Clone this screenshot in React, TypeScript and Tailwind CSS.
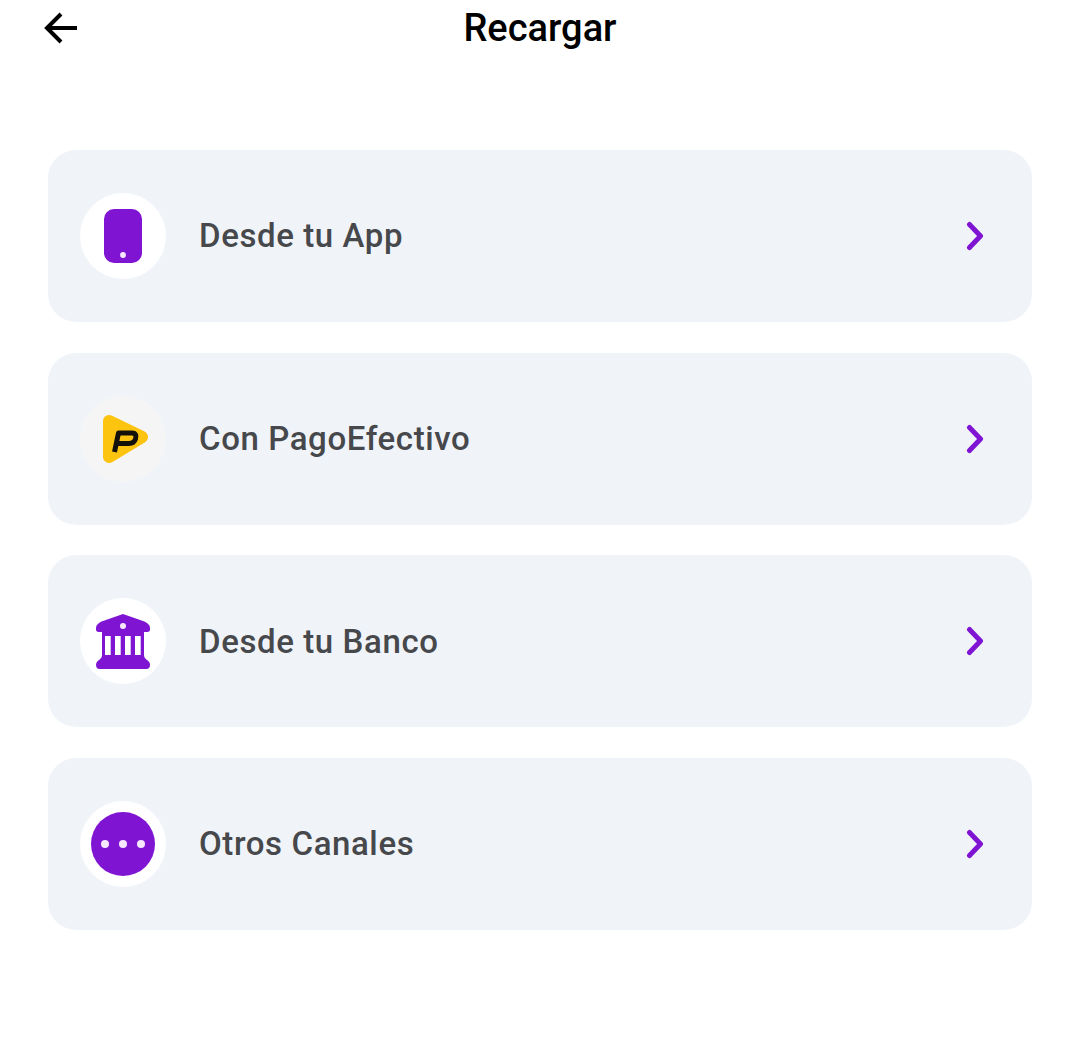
import React from 'react';

function PhoneIcon() {
  return (
    <svg width="38" height="54" viewBox="0 0 38 54">
      <rect x="0" y="0" width="38" height="54" rx="10" fill="#7f14d3" />
      <circle cx="19" cy="46" r="2.9" fill="#f6e9ff" />
    </svg>
  );
}

function PagoIcon() {
  return (
    <svg width="48" height="48" viewBox="0 0 48 48" className="ml-[8px]">
      <path d="M6 6 L39 22 L6 42 Z" fill="#fcc30f" stroke="#fcc30f" strokeWidth="12" strokeLinejoin="round" />
      <path d="M11.5 37 L15.5 18 L29 18 C33 18 33.5 21 32.5 24 C31.5 27 29 28.5 26 28.5 L14 28.5" fill="none" stroke="#14110a" strokeWidth="5" strokeLinejoin="round" />
    </svg>
  );
}

function BankIcon() {
  return (
    <svg width="54" height="55" viewBox="0 0 54 55">
      <path d="M27 0 L47 7 C51 8.5 54 11 54 14 L54 15.5 C54 17 53 18 51.5 18 L2.5 18 C1 18 0 17 0 15.5 L0 14 C0 11 3 8.5 7 7 Z" fill="#7f14d3" />
      <circle cx="27" cy="12" r="3" fill="#f6e9ff" />
      <path d="M6 18 L48 18 L48 41 C48 44 50 45 51 46 C53 47 54 49 54 51 C54 53.5 52.5 55 50.5 55 L3.5 55 C1.5 55 0 53.5 0 51 C0 49 1 47 3 46 C4 45 6 44 6 41 Z" fill="#7f14d3" />
      <rect x="9" y="22" width="5.7" height="19" fill="#ffffff" />
      <rect x="19" y="22" width="5.7" height="19" fill="#ffffff" />
      <rect x="29" y="22" width="5.7" height="19" fill="#ffffff" />
      <rect x="39" y="22" width="5.7" height="19" fill="#ffffff" />
    </svg>
  );
}

function DotsIcon() {
  return (
    <svg width="64" height="64" viewBox="0 0 64 64">
      <circle cx="32" cy="32" r="32" fill="#7f14d3" />
      <circle cx="14" cy="32" r="4" fill="#f6e9ff" />
      <circle cx="32" cy="32" r="4" fill="#f6e9ff" />
      <circle cx="50" cy="32" r="4" fill="#f6e9ff" />
    </svg>
  );
}

function Chevron() {
  return (
    <svg width="18" height="30" viewBox="0 0 18 30" fill="none">
      <path d="M3.5 3.5 L14.5 15 L3.5 26.5" stroke="#7f14d3" strokeWidth="5" strokeLinecap="round" strokeLinejoin="round" />
    </svg>
  );
}

const rows = [
  { label: 'Desde tu App', icon: <PhoneIcon />, circle: 'bg-white' },
  { label: 'Con PagoEfectivo', icon: <PagoIcon />, circle: 'bg-[#f5f5f6]' },
  { label: 'Desde tu Banco', icon: <BankIcon />, circle: 'bg-white' },
  { label: 'Otros Canales', icon: <DotsIcon />, circle: 'bg-white' },
];

export default function App() {
  return (
    <div className="w-[1080px] h-[1042px] bg-white font-['Roboto',sans-serif] overflow-hidden">
      <header className="flex items-center h-[56px] pl-[42px]">
        <div className="w-[38px] flex shrink-0">
          <svg width="38" height="36" viewBox="0 0 38 36" fill="none">
            <path d="M35 18 L5 18 M19 4 L5 18 L19 32" stroke="#000" strokeWidth="4" />
          </svg>
        </div>
        <h1 className="flex-1 text-center pr-[80px] text-[38px] leading-none font-medium text-black">Recargar</h1>
      </header>

      <div className="flex flex-col gap-[30.67px] mx-[48px] mt-[94px]">
        {rows.map((row) => (
          <div key={row.label} className="flex items-center h-[172px] rounded-[28px] bg-[#f0f4f9] pl-[32px] pr-[48px]">
            <div className={`flex items-center justify-center w-[86px] h-[86px] rounded-full shrink-0 ${row.circle}`}>
              {row.icon}
            </div>
            <span className="flex-1 ml-[33px] text-[33px] font-medium tracking-[0.6px] text-[#47484c]">{row.label}</span>
            <Chevron />
          </div>
        ))}
      </div>
    </div>
  );
}
